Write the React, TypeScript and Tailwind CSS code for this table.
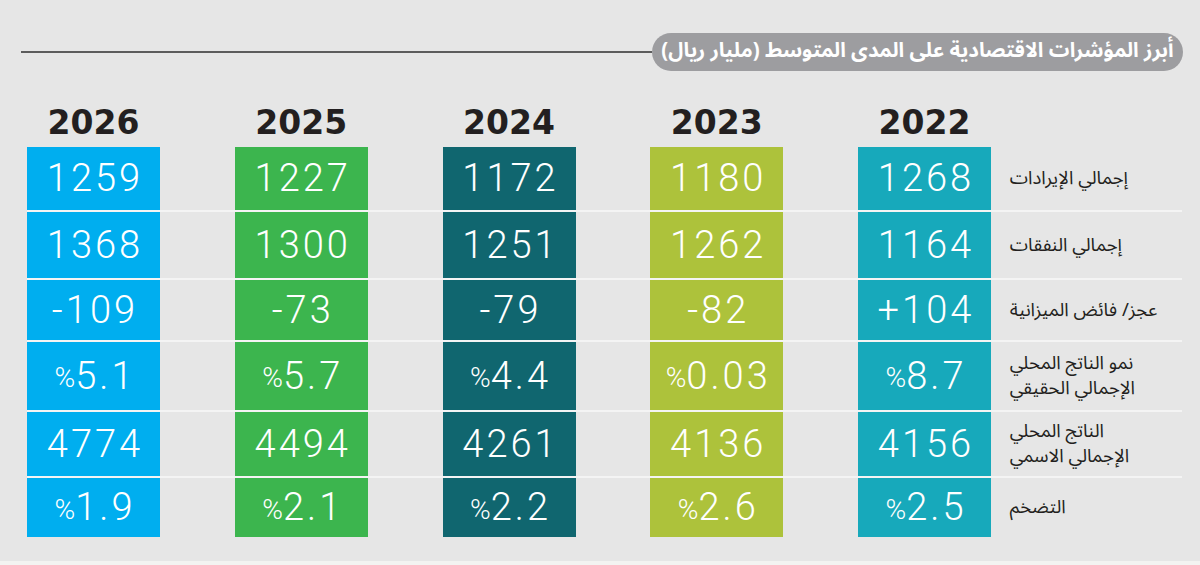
import React from 'react';

const years = ['2026', '2025', '2024', '2023', '2022'];
const colors = ['bg-[#00aeef]', 'bg-[#3cb54e]', 'bg-[#10666f]', 'bg-[#adc23b]', 'bg-[#17a9bb]'];

type Row = { label: string[]; values: string[]; h: string; pct?: boolean };

const rows: Row[] = [
  { label: ['إجمالي الإيرادات'], values: ['1259', '1227', '1172', '1180', '1268'], h: 'h-[63px]' },
  { label: ['إجمالي النفقات'], values: ['1368', '1300', '1251', '1262', '1164'], h: 'h-[66px]' },
  { label: ['عجز/ فائض الميزانية'], values: ['-109', '-73', '-79', '-82', '+104'], h: 'h-[60px]' },
  { label: ['نمو الناتج المحلي', 'الإجمالي الحقيقي'], values: ['5.1', '5.7', '4.4', '0.03', '8.7'], h: 'h-[68px]', pct: true },
  { label: ['الناتج المحلي', 'الإجمالي الاسمي'], values: ['4774', '4494', '4261', '4136', '4156'], h: 'h-[64px]' },
  { label: ['التضخم'], values: ['1.9', '2.1', '2.2', '2.6', '2.5'], h: 'h-[59px]', pct: true },
];

const grid = 'grid grid-cols-[133px_133px_133px_133px_133px_1fr] gap-x-[74.75px]';
const arabic = { fontFamily: '"Noto Sans Arabic", "DejaVu Sans", sans-serif' };

export default function App() {
  return (
    <div className="w-[1200px] h-[565px] bg-[#e6e6e6] flex flex-col overflow-hidden">
      <div className="flex-1">
        {/* Title */}
        <div className="flex items-center pt-[33px] pl-[21px] pr-[17px]">
          <div className="flex-1 h-[2px] bg-[#5c5c5c]" />
          <div
            dir="rtl"
            className="w-[531px] h-[38px] rounded-full bg-[#9d9da0] flex items-center justify-center text-white font-bold text-[20.5px] pb-[2px]"
            style={arabic}
          >
            أبرز المؤشرات الاقتصادية على المدى المتوسط (مليار ريال)
          </div>
        </div>

        {/* Years */}
        <div className={`${grid} pl-[27px] pr-[18px] mt-[27px] h-[48px]`}>
          {years.map((y) => (
            <div
              key={y}
              className="flex items-center justify-center text-[33px] font-bold text-[#231f20]"
              style={{ fontFamily: '"DejaVu Sans", sans-serif' }}
            >
              {y}
            </div>
          ))}
          <div />
        </div>

        {/* Table */}
        <div className="ml-[27px] mr-[18px] mt-[1px]">
          {rows.map((r, i) => (
            <div
              key={i}
              className={`${grid} ${i < rows.length - 1 ? 'border-b-2 border-[#f4f4f4]' : ''}`}
            >
              {r.values.map((v, j) => (
                <div
                  key={j}
                  className={`${r.h} ${colors[j]} flex items-center justify-center text-white font-light text-[38px]`}
                  style={{ fontFamily: 'Roboto, sans-serif' }}
                >
                  {r.pct && <span className="text-[28px] mt-[4px]">%</span>}
                  <span className="tracking-[0.08em] -mr-[0.08em]">{v}</span>
                </div>
              ))}
              <div
                dir="rtl"
                className="-ml-[56px] flex flex-col justify-center text-[18.5px] leading-[25px] text-[#231f20]"
                style={arabic}
              >
                {r.label.map((l) => (
                  <div key={l} className="w-full text-left">
                    {l}
                  </div>
                ))}
              </div>
            </div>
          ))}
        </div>
      </div>
      <div className="h-[4px] bg-[#f3f3f1]" />
    </div>
  );
}
